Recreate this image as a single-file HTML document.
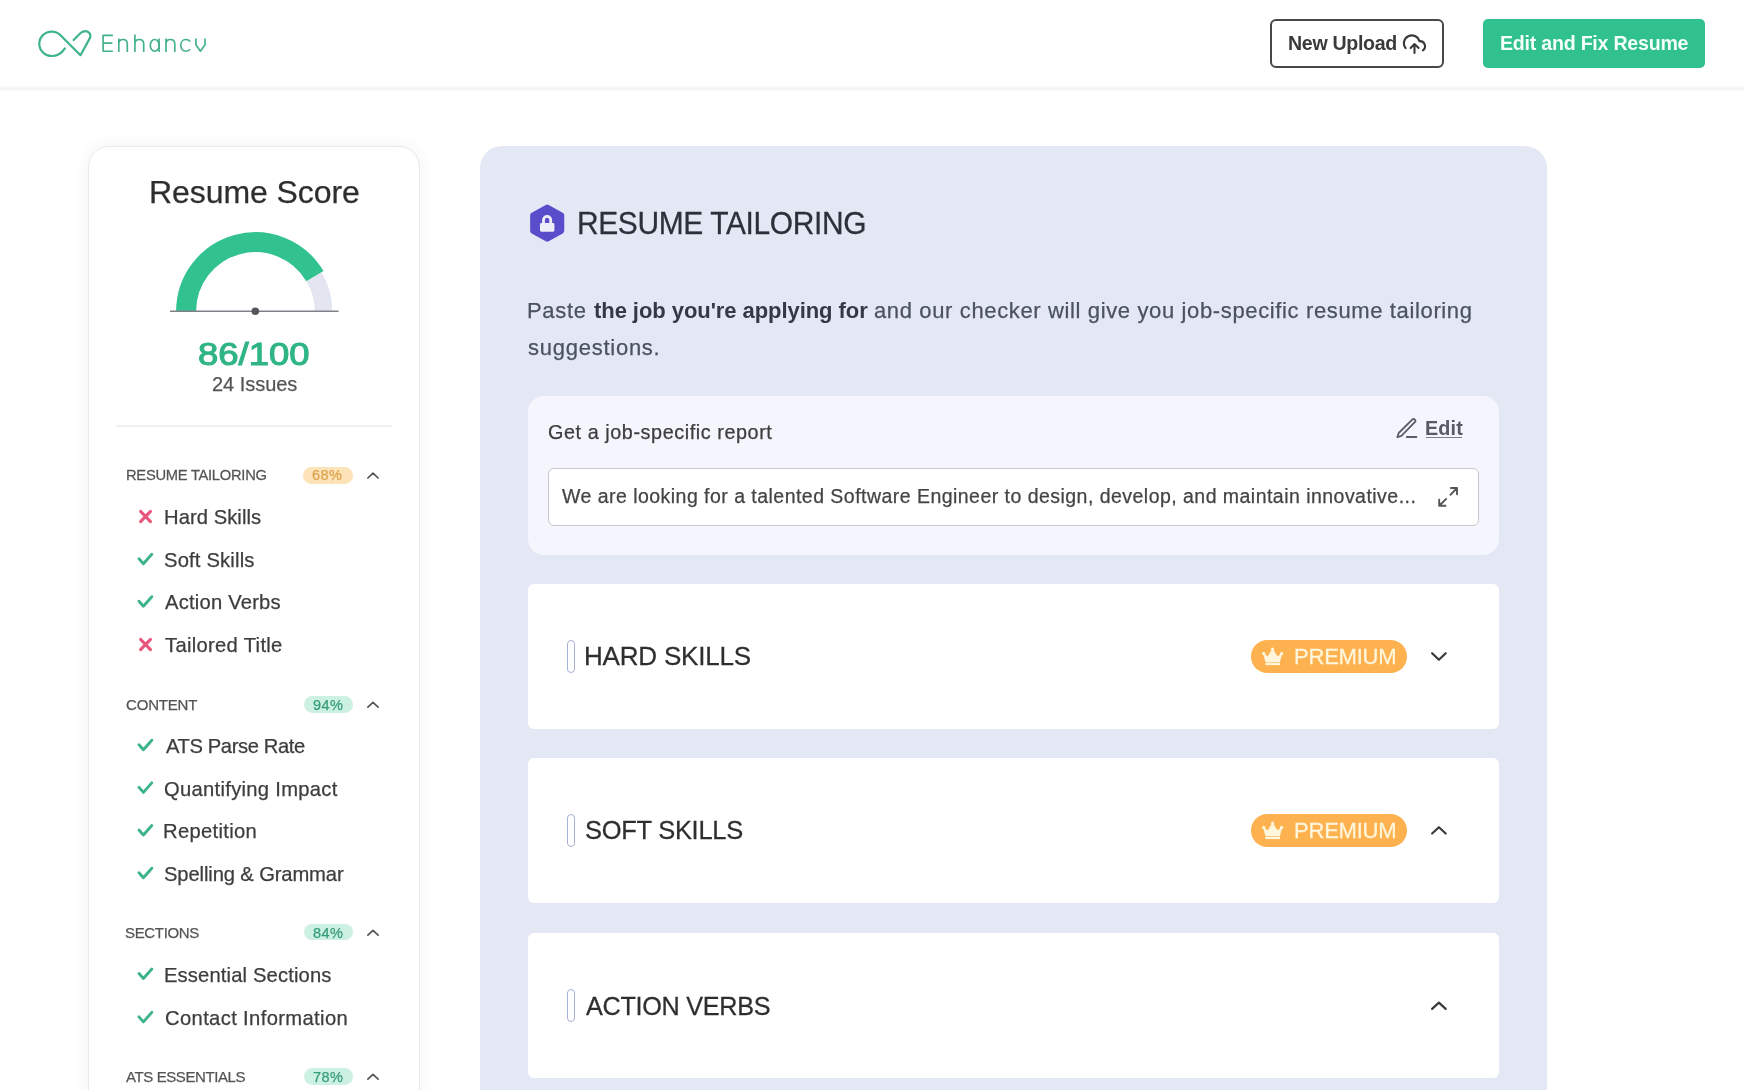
<!DOCTYPE html>
<html><head><meta charset="utf-8"><style>
html,body{margin:0;padding:0;overflow:hidden;}
body{width:1744px;height:1090px;overflow:hidden;position:relative;background:#fff;font-family:"Liberation Sans",sans-serif;}
.t{position:absolute;white-space:nowrap;will-change:transform;}
</style></head><body>
<div style="position:relative;width:1744px;height:1090px;overflow:hidden;">
<svg style="position:absolute;left:0;top:0" width="1744" height="100"><path d="M64.9 48.3 C61.5 53.5 57 56 51.8 56 C44.8 56 39.3 50.5 39.3 43.7 C39.3 36.9 44.8 31.6 51.8 31.6 C55.2 31.6 58 32.8 60.5 35.2 L80.5 55.2 L89.6 38.6 C91.8 34.6 89 31.2 85.3 31.2 C83.5 31.2 82.1 31.8 80.6 33 L73.6 40" fill="none" stroke="#3fb38c" stroke-width="2.2" stroke-linecap="round" stroke-linejoin="round"/><path d="M1405.6 48.2 A7.9 7.9 0 1 1 1419.4 41.2 A5.1 5.1 0 0 1 1422.9 50.4 M1414.5 53 V44.2 M1410.6 47.9 L1414.5 44 L1418.6 47.9" fill="none" stroke="#3a3a3a" stroke-width="2.1" stroke-linecap="round" stroke-linejoin="round"/></svg>
<svg style="position:absolute;left:0;top:0" width="240" height="80"><g fill="none" stroke="#42b08b" stroke-width="1.65" stroke-linejoin="round"><path d="M112.9 35.3 H103.1 V51.2 H112.9 M103.1 43.1 H112.4"/><path d="M118.8 38.6 V52.1 M118.8 44 C118.8 41.2 120.7 39.5 123.05 39.5 C125.4 39.5 127.3 41.2 127.3 44 V52.1"/><path d="M134.9 34.6 V52.1 M134.9 44 C134.9 41.2 136.8 39.5 139.3 39.5 C141.8 39.5 143.7 41.2 143.7 44 V52.1"/><ellipse cx="154.7" cy="45.35" rx="4.4" ry="5.85"/><path d="M159.1 38.6 V52.1"/><path d="M166 38.6 V52.1 M166 44 C166 41.2 167.9 39.5 170.4 39.5 C172.9 39.5 174.8 41.2 174.8 44 V52.1"/><path d="M190.2 41.6 C189.3 40.3 187.6 39.5 185.7 39.5 C182.8 39.5 180.8 42.1 180.8 45.35 C180.8 48.6 182.8 51.2 185.7 51.2 C187.6 51.2 189.3 50.4 190.2 49.1"/><path d="M195.9 38.6 V44.8 L200.45 51.2 L205 44.8 V38.6"/></g></svg>
<div style="position:absolute;left:0px;top:85.5px;width:1744px;height:5.5px;background:linear-gradient(#fdfdfd,#f3f3f3 45%,#f4f4f4 60%,#fdfdfd)"></div>
<div style="position:absolute;left:1270px;top:19px;width:174px;height:49px;box-sizing:border-box;border:2px solid #474747;border-radius:6px"></div>
<div class="t" style="left:1287.80px;top:34px;font-size:19.6px;line-height:19.6px;color:#3a3a3a;font-weight:700;letter-spacing:-0.322px;">New Upload</div>
<div style="position:absolute;left:1483px;top:19px;width:222px;height:49px;background:#30c18e;border-radius:5px"></div>
<div class="t" style="left:1499.80px;top:34px;font-size:19.6px;line-height:19.6px;color:#f4fff9;font-weight:700;letter-spacing:-0.233px;">Edit and Fix Resume</div>
<div style="position:absolute;left:87.5px;top:146px;width:332.7px;height:1000px;box-sizing:border-box;background:#fff;border:1px solid #eaeaea;border-radius:21px;box-shadow:0 0 16px 2px rgba(0,0,0,0.045)"></div>
<div class="t" style="left:149.10px;top:176px;font-size:32px;line-height:32px;color:#2e2e2e;font-weight:400;letter-spacing:-0.073px;-webkit-text-stroke:0.25px #2e2e2e;">Resume Score</div>
<svg style="position:absolute;left:0;top:0" width="440" height="340"><path d="M314.06 276.69 A68.2 68.2 0 0 1 323.50 311.30" fill="none" stroke="#e3e6f1" stroke-width="17.5"/><path d="M186.10 311.30 A69.2 69.2 0 0 1 314.92 276.18" fill="none" stroke="#32c28f" stroke-width="20"/><line x1="170" y1="311.3" x2="338.5" y2="311.3" stroke="#808088" stroke-width="1.5"/><circle cx="255.3" cy="311.3" r="3.8" fill="#55555e"/></svg>
<div class="t" style="left:197.50px;top:338px;font-size:32px;line-height:32px;color:#30b585;font-weight:500;letter-spacing:0.000px;transform:scale(1.14,1.0);transform-origin:0 27px;-webkit-text-stroke:1.1px #30b585;">86/100</div>
<div class="t" style="left:211.50px;top:374px;font-size:20px;line-height:20px;color:#555;font-weight:400;letter-spacing:-0.038px;-webkit-text-stroke:0.25px #555;">24 Issues</div>
<div style="position:absolute;left:116px;top:425px;width:276px;height:2px;background:#f0f0f0"></div>
<div class="t" style="left:125.60px;top:468px;font-size:14.73px;line-height:14.73px;color:#555;font-weight:400;letter-spacing:-0.273px;-webkit-text-stroke:0.25px #555;transform:scale(1.0,1.018);transform-origin:0 12px;">RESUME TAILORING</div>
<div style="position:absolute;left:303.2px;top:467.0px;width:50px;height:16.8px;background:#fde3b8;border-radius:8.4px"></div>
<div class="t" style="left:312.20px;top:468px;font-size:14.5px;line-height:14.5px;color:#dea34f;font-weight:400;letter-spacing:0.400px;-webkit-text-stroke:0.25px #dea34f;">68%</div>
<div class="t" style="left:163.90px;top:507px;font-size:20.2px;line-height:20.2px;color:#3d3d3d;font-weight:400;letter-spacing:0.060px;-webkit-text-stroke:0.25px #3d3d3d;">Hard Skills</div>
<div class="t" style="left:164.40px;top:550px;font-size:20.2px;line-height:20.2px;color:#3d3d3d;font-weight:400;letter-spacing:0.180px;-webkit-text-stroke:0.25px #3d3d3d;">Soft Skills</div>
<div class="t" style="left:165.40px;top:592px;font-size:20.2px;line-height:20.2px;color:#3d3d3d;font-weight:400;letter-spacing:0.209px;-webkit-text-stroke:0.25px #3d3d3d;">Action Verbs</div>
<div class="t" style="left:165.40px;top:635px;font-size:20.2px;line-height:20.2px;color:#3d3d3d;font-weight:400;letter-spacing:0.308px;-webkit-text-stroke:0.25px #3d3d3d;">Tailored Title</div>
<div class="t" style="left:125.60px;top:697px;font-size:15px;line-height:15px;color:#555;font-weight:400;letter-spacing:-0.183px;-webkit-text-stroke:0.25px #555;">CONTENT</div>
<div style="position:absolute;left:303.6px;top:695.8000000000001px;width:49.4px;height:16.8px;background:#ccf0e1;border-radius:8.4px"></div>
<div class="t" style="left:313.20px;top:698px;font-size:14.5px;line-height:14.5px;color:#369c7a;font-weight:400;letter-spacing:0.450px;-webkit-text-stroke:0.25px #369c7a;">94%</div>
<div class="t" style="left:165.70px;top:736px;font-size:20.2px;line-height:20.2px;color:#3d3d3d;font-weight:400;letter-spacing:-0.400px;-webkit-text-stroke:0.25px #3d3d3d;">ATS Parse Rate</div>
<div class="t" style="left:164.40px;top:779px;font-size:20.2px;line-height:20.2px;color:#3d3d3d;font-weight:400;letter-spacing:0.294px;-webkit-text-stroke:0.25px #3d3d3d;">Quantifying Impact</div>
<div class="t" style="left:163.40px;top:821px;font-size:20.2px;line-height:20.2px;color:#3d3d3d;font-weight:400;letter-spacing:0.311px;-webkit-text-stroke:0.25px #3d3d3d;">Repetition</div>
<div class="t" style="left:164.40px;top:864px;font-size:20.2px;line-height:20.2px;color:#3d3d3d;font-weight:400;letter-spacing:-0.124px;-webkit-text-stroke:0.25px #3d3d3d;">Spelling &amp; Grammar</div>
<div class="t" style="left:125.40px;top:925px;font-size:15px;line-height:15px;color:#555;font-weight:400;letter-spacing:-0.343px;-webkit-text-stroke:0.25px #555;">SECTIONS</div>
<div style="position:absolute;left:303.6px;top:923.7px;width:49.4px;height:16.8px;background:#ccf0e1;border-radius:8.4px"></div>
<div class="t" style="left:313.20px;top:926px;font-size:14.5px;line-height:14.5px;color:#369c7a;font-weight:400;letter-spacing:0.450px;-webkit-text-stroke:0.25px #369c7a;">84%</div>
<div class="t" style="left:163.80px;top:965px;font-size:20.2px;line-height:20.2px;color:#3d3d3d;font-weight:400;letter-spacing:0.147px;-webkit-text-stroke:0.25px #3d3d3d;">Essential Sections</div>
<div class="t" style="left:164.80px;top:1008px;font-size:20.2px;line-height:20.2px;color:#3d3d3d;font-weight:400;letter-spacing:0.367px;-webkit-text-stroke:0.25px #3d3d3d;">Contact Information</div>
<div class="t" style="left:126.40px;top:1069px;font-size:15px;line-height:15px;color:#555;font-weight:400;letter-spacing:-0.400px;-webkit-text-stroke:0.25px #555;">ATS ESSENTIALS</div>
<div style="position:absolute;left:303.6px;top:1067.8px;width:49.4px;height:16.8px;background:#ccf0e1;border-radius:8.4px"></div>
<div class="t" style="left:313.20px;top:1070px;font-size:14.5px;line-height:14.5px;color:#369c7a;font-weight:400;letter-spacing:0.450px;-webkit-text-stroke:0.25px #369c7a;">78%</div>
<svg style="position:absolute;left:0;top:0" width="440" height="1090"><path d="M367.9 478.0 L373 473.2 L378.1 478.0" fill="none" stroke="#555" stroke-width="1.7" stroke-linecap="round" stroke-linejoin="round"/><path d="M140.6 511.4 L150.5 521.6 M150.5 511.4 L140.6 521.6" fill="none" stroke="#e8557a" stroke-width="3" stroke-linecap="round"/><path d="M139 558.8 L143.4 563.8 L151.8 554.3" fill="none" stroke="#3db38a" stroke-width="2.9" stroke-linecap="round" stroke-linejoin="round"/><path d="M139 601.2 L143.4 606.2 L151.8 596.7" fill="none" stroke="#3db38a" stroke-width="2.9" stroke-linecap="round" stroke-linejoin="round"/><path d="M140.6 639.4 L150.5 649.6 M150.5 639.4 L140.6 649.6" fill="none" stroke="#e8557a" stroke-width="3" stroke-linecap="round"/><path d="M367.9 707.1999999999999 L373 702.4 L378.1 707.1999999999999" fill="none" stroke="#555" stroke-width="1.7" stroke-linecap="round" stroke-linejoin="round"/><path d="M139 744.7 L143.4 749.7 L151.8 740.2" fill="none" stroke="#3db38a" stroke-width="2.9" stroke-linecap="round" stroke-linejoin="round"/><path d="M139 787.4 L143.4 792.4 L151.8 782.9" fill="none" stroke="#3db38a" stroke-width="2.9" stroke-linecap="round" stroke-linejoin="round"/><path d="M139 830.0 L143.4 835.0 L151.8 825.5" fill="none" stroke="#3db38a" stroke-width="2.9" stroke-linecap="round" stroke-linejoin="round"/><path d="M139 872.7 L143.4 877.7 L151.8 868.2" fill="none" stroke="#3db38a" stroke-width="2.9" stroke-linecap="round" stroke-linejoin="round"/><path d="M367.9 935.0999999999999 L373 930.3 L378.1 935.0999999999999" fill="none" stroke="#555" stroke-width="1.7" stroke-linecap="round" stroke-linejoin="round"/><path d="M139 973.5 L143.4 978.5 L151.8 969.0" fill="none" stroke="#3db38a" stroke-width="2.9" stroke-linecap="round" stroke-linejoin="round"/><path d="M139 1016.9 L143.4 1021.9 L151.8 1012.4" fill="none" stroke="#3db38a" stroke-width="2.9" stroke-linecap="round" stroke-linejoin="round"/><path d="M367.9 1079.1999999999998 L373 1074.3999999999999 L378.1 1079.1999999999998" fill="none" stroke="#555" stroke-width="1.7" stroke-linecap="round" stroke-linejoin="round"/></svg>
<div style="position:absolute;left:480px;top:146px;width:1067px;height:1000px;background:#e4e8f4;border-radius:22px"></div>
<svg style="position:absolute;left:0;top:0" width="1744" height="1090"><path d="M547.2 207.6 L561.25 215.35 L561.25 230.85 L547.2 238.6 L533.15 230.85 L533.15 215.35 Z" fill="#5a4dcb" stroke="#5a4dcb" stroke-width="6" stroke-linejoin="round"/><path d="M543.5 223.8 V220 A3.6 3.6 0 0 1 550.7 220 V223.8" fill="none" stroke="#eeeefa" stroke-width="2.8"/><rect x="540" y="223" width="14.4" height="8.7" rx="1.4" fill="#eeeefa"/></svg>
<div class="t" style="left:576.80px;top:209px;font-size:29.94px;line-height:29.94px;color:#2b3039;font-weight:400;letter-spacing:-0.367px;-webkit-text-stroke:0.25px #2b3039;transform:scale(1.0,1.069);transform-origin:0 25px;">RESUME TAILORING</div>
<div class="t" style="left:527.20px;top:300px;font-size:22px;line-height:22px;color:#4a5260;font-weight:400;letter-spacing:0.675px;-webkit-text-stroke:0.25px #4a5260;">Paste</div>
<div class="t" style="left:593.80px;top:300px;font-size:22px;line-height:22px;color:#343a45;font-weight:700;letter-spacing:-0.062px;">the job you&#39;re applying for</div>
<div class="t" style="left:874.40px;top:300px;font-size:22px;line-height:22px;color:#4a5260;font-weight:400;letter-spacing:0.633px;-webkit-text-stroke:0.25px #4a5260;">and our checker will give you job-specific resume tailoring</div>
<div class="t" style="left:528.20px;top:337px;font-size:22px;line-height:22px;color:#4a5260;font-weight:400;letter-spacing:0.745px;-webkit-text-stroke:0.25px #4a5260;">suggestions.</div>
<div style="position:absolute;left:528px;top:396px;width:971px;height:159px;background:#f4f5fd;border-radius:16px"></div>
<div class="t" style="left:547.50px;top:423px;font-size:19.8px;line-height:19.8px;color:#3d3d3d;font-weight:400;letter-spacing:0.575px;-webkit-text-stroke:0.25px #3d3d3d;">Get a job-specific report</div>
<div class="t" style="left:1424.60px;top:419px;font-size:19.8px;line-height:19.8px;color:#575b63;font-weight:700;letter-spacing:0.133px;">Edit</div>
<div style="position:absolute;left:1425.6px;top:437px;width:36.4px;height:1.4px;background:#7a7e86"></div>
<div style="position:absolute;left:548px;top:468px;width:931px;height:58px;box-sizing:border-box;background:#fff;border:1px solid #c8c8cc;border-radius:6px"></div>
<div class="t" style="left:562.40px;top:487px;font-size:19.5px;line-height:19.5px;color:#444;font-weight:400;letter-spacing:0.466px;-webkit-text-stroke:0.25px #444;">We are looking for a talented Software Engineer to design, develop, and maintain innovative...</div>
<svg style="position:absolute;left:0;top:0" width="1744" height="1090"><path d="M1397.3 437.2 L1398.7 433 L1412.2 419.6 A1.75 1.75 0 0 1 1414.8 422.2 L1401.4 435.8 Z" fill="none" stroke="#5a5e66" stroke-width="1.8" stroke-linejoin="round"/><path d="M1406.8 437 H1416.4" fill="none" stroke="#5a5e66" stroke-width="1.9" stroke-linecap="round"/><path d="M1450.9 488 H1457 V494.3 M1457 488 L1450.4 494.8 M1445.5 505.8 H1439.2 V499.6 M1439.2 505.8 L1446.2 498.9" fill="none" stroke="#555" stroke-width="1.9" stroke-linecap="round" stroke-linejoin="round"/></svg>
<div style="position:absolute;left:528px;top:583.8px;width:971px;height:145px;background:#fff;border-radius:6px"></div>
<div style="position:absolute;left:566.6px;top:639.8px;width:8.3px;height:32.8px;box-sizing:border-box;border:1.7px solid #a7b1d6;border-radius:4px;background:#fff"></div>
<div class="t" style="left:584.00px;top:643px;font-size:26.04px;line-height:26.04px;color:#2e2e2e;font-weight:400;letter-spacing:-0.220px;-webkit-text-stroke:0.25px #2e2e2e;transform:scale(1.0,1.025);transform-origin:0 22px;">HARD SKILLS</div>
<div style="position:absolute;left:1251px;top:640.1px;width:156px;height:32.7px;background:#fdb14f;border-radius:16.4px"></div>
<div class="t" style="left:1294.20px;top:646px;font-size:22.09px;line-height:22.09px;color:#fff6dc;font-weight:400;letter-spacing:-0.267px;-webkit-text-stroke:0.25px #fff6dc;transform:scale(1.0,1.028);transform-origin:0 18px;">PREMIUM</div>
<div style="position:absolute;left:528px;top:757.8px;width:971px;height:145px;background:#fff;border-radius:6px"></div>
<div style="position:absolute;left:566.6px;top:813.8px;width:8.3px;height:32.8px;box-sizing:border-box;border:1.7px solid #a7b1d6;border-radius:4px;background:#fff"></div>
<div class="t" style="left:584.80px;top:818px;font-size:25.47px;line-height:25.47px;color:#2e2e2e;font-weight:400;letter-spacing:-0.270px;-webkit-text-stroke:0.25px #2e2e2e;transform:scale(1.0,1.048);transform-origin:0 21px;">SOFT SKILLS</div>
<div style="position:absolute;left:1251px;top:814.1px;width:156px;height:32.7px;background:#fdb14f;border-radius:16.4px"></div>
<div class="t" style="left:1294.20px;top:820px;font-size:22.09px;line-height:22.09px;color:#fff6dc;font-weight:400;letter-spacing:-0.267px;-webkit-text-stroke:0.25px #fff6dc;transform:scale(1.0,1.028);transform-origin:0 18px;">PREMIUM</div>
<div style="position:absolute;left:528px;top:933.2px;width:971px;height:145px;background:#fff;border-radius:6px"></div>
<div style="position:absolute;left:566.6px;top:989.2px;width:8.3px;height:32.8px;box-sizing:border-box;border:1.7px solid #a7b1d6;border-radius:4px;background:#fff"></div>
<div class="t" style="left:585.80px;top:994px;font-size:25.23px;line-height:25.23px;color:#2e2e2e;font-weight:400;letter-spacing:-0.291px;-webkit-text-stroke:0.25px #2e2e2e;transform:scale(1.0,1.058);transform-origin:0 21px;">ACTION VERBS</div>
<svg style="position:absolute;left:0;top:0" width="1744" height="1090"><g transform="translate(0 0.0)" fill="#fff6dc"><path d="M1263.8 653.8 L1267.8 657.4 L1272.6 649.5 L1277.4 657.4 L1281.6 653.8 L1279.4 661.6 H1265.9 Z" stroke="#fff6dc" stroke-width="1.2" stroke-linejoin="round"/><circle cx="1263.7" cy="653.4" r="1.6"/><circle cx="1272.6" cy="649.1" r="1.6"/><circle cx="1281.7" cy="653.4" r="1.6"/><rect x="1265.4" y="662.8" width="14.6" height="2.3"/></g><path d="M1432.1 653.2 L1438.9 659.7 L1445.7 653.2" fill="none" stroke="#3a3a3a" stroke-width="2.2" stroke-linecap="round" stroke-linejoin="round"/><g transform="translate(0 174.0)" fill="#fff6dc"><path d="M1263.8 653.8 L1267.8 657.4 L1272.6 649.5 L1277.4 657.4 L1281.6 653.8 L1279.4 661.6 H1265.9 Z" stroke="#fff6dc" stroke-width="1.2" stroke-linejoin="round"/><circle cx="1263.7" cy="653.4" r="1.6"/><circle cx="1272.6" cy="649.1" r="1.6"/><circle cx="1281.7" cy="653.4" r="1.6"/><rect x="1265.4" y="662.8" width="14.6" height="2.3"/></g><path d="M1432.1 833.5 L1438.9 827.2 L1445.7 833.5" fill="none" stroke="#3a3a3a" stroke-width="2.2" stroke-linecap="round" stroke-linejoin="round"/><path d="M1432.1 1008.9 L1438.9 1002.6 L1445.7 1008.9" fill="none" stroke="#3a3a3a" stroke-width="2.2" stroke-linecap="round" stroke-linejoin="round"/></svg>
</div></body></html>
